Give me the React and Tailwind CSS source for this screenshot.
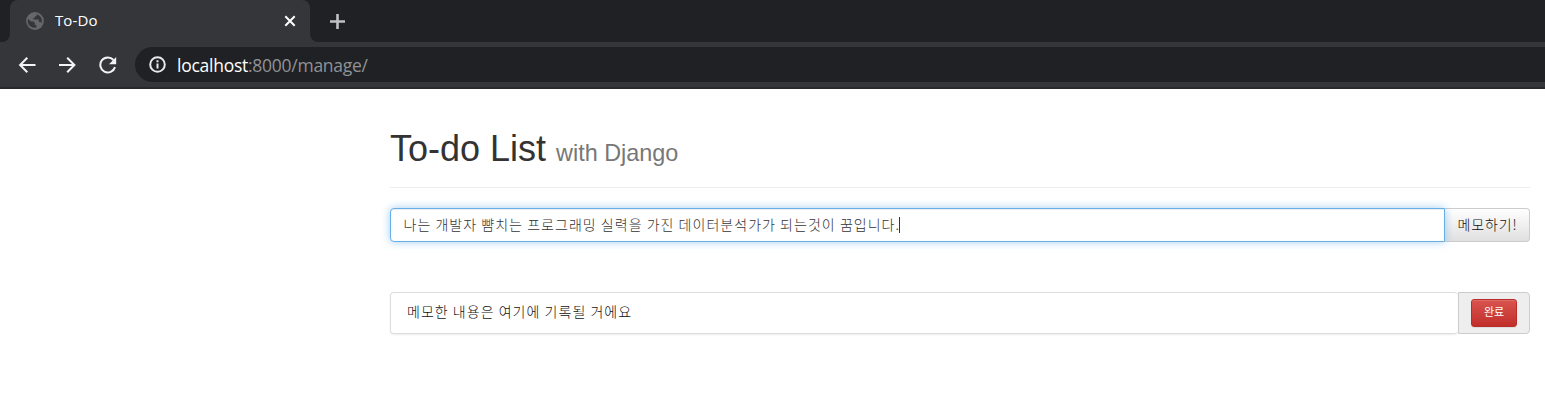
function Globe() {
  return (
    <svg className="h-[18px] w-[18px] shrink-0" viewBox="0 0 18 18">
      <circle cx="9" cy="9" r="8.9" fill="#64676b" />
      <path d="M2 7 L5.2 9.6 H7.6 L8.8 11 V13 H10.4 V15.6 A6.9 6.9 0 0 1 2 7 Z" fill="#35363a" />
      <path d="M10.6 2.2 A7 7 0 0 1 15.6 11.2 L14.6 10 H12.8 V7.6 H7.4 V5.8 H9 V4.2 H10.6 Z" fill="#35363a" />
    </svg>
  );
}

function Browser() {
  return (
    <header className="h-[89px] bg-[#35363a] font-['Open_Sans','Noto_Sans',sans-serif]">
      <div className="flex h-[42px] bg-[#35363a]">
        <div className="w-[10px] rounded-br-[8px] bg-[#202124]" />
        <div className="w-[300px] bg-[#202124]">
          <div className="flex h-full items-center rounded-t-[8px] bg-[#35363a] pr-[14px] pl-4">
            <Globe />
            <span className="ml-[11px] flex-1 pb-0.5 text-[15px] leading-5 tracking-[0.1px] text-white">To-Do</span>
            <svg className="h-3 w-3" viewBox="0 0 12 12" stroke="#fff" strokeWidth="2">
              <path d="M1.3 1.3 10.7 10.7 M10.7 1.3 1.3 10.7" />
            </svg>
          </div>
        </div>
        <div className="flex flex-1 items-center rounded-bl-[8px] bg-[#202124] pl-5">
          <svg className="h-[15px] w-[15px]" viewBox="0 0 15 15" stroke="#bec1c5" strokeWidth="2.6">
            <path d="M0 7.5H15 M7.5 0V15" />
          </svg>
        </div>
      </div>
      <nav className="flex h-[47px] items-start border-b-2 border-[#28292c] pt-[5px]">
        <div className="flex h-[35px] w-[135px] items-center gap-[22px] pl-[18px]">
          <svg className="h-[18px] w-[18px]" viewBox="0 0 18 18" fill="none" stroke="#f1f3f4" strokeWidth="2">
            <path d="M17.5 9H2.5 M9.3 1.8 2.1 9l7.2 7.2" />
          </svg>
          <svg className="h-[18px] w-[18px]" viewBox="0 0 18 18" fill="none" stroke="#f1f3f4" strokeWidth="2">
            <path d="M1 9h15 M9.2 1.8 16.4 9l-7.2 7.2" />
          </svg>
          <svg className="ml-px h-[18px] w-[18px]" viewBox="0 0 18 18" fill="none" stroke="#f1f3f4" strokeWidth="2">
            <path d="M14.5 4A7.5 7.5 0 1 0 16 11.1" />
            <path d="M17.2 1v7.2H10Z" fill="#f1f3f4" stroke="none" />
          </svg>
        </div>
        <div className="flex h-[35px] flex-1 items-center rounded-l-full bg-[#202124] pl-[14px]">
          <svg className="h-[17px] w-[17px]" viewBox="0 0 17 17" fill="none" stroke="#e8eaed" strokeWidth="2">
            <circle cx="8.5" cy="8.5" r="7.3" />
            <path d="M8.5 7.6v5 M8.5 4.3v2" />
          </svg>
          <span className="ml-[11px] text-[17.5px] leading-6 tracking-[-0.26px] text-[#8f9296]">
            <span className="text-white">localhost</span>:8000/manage/
          </span>
        </div>
      </nav>
    </header>
  );
}

export default function App() {
  return (
    <div className="h-[404px] overflow-hidden bg-white font-['Liberation_Sans','Noto_Sans_CJK_KR',sans-serif]">
      <Browser />
      <main className="ml-[390px] w-[1140px] pt-[40px]">
        <h1 className="h-[59px] border-b border-[#eeeeee] text-[36px] leading-[40px] text-[#333]">
          To-do List <small className="text-[23.4px] leading-none text-[#777]">with Django</small>
        </h1>
        <div className="mt-5 flex h-[34px]">
          <div className="relative flex w-[1055px] items-center rounded-l-[4px] border border-[#66afe9] bg-white pb-0.5 pl-[12.5px] shadow-[inset_0_1px_1px_rgba(0,0,0,0.075),0_0_8px_rgba(102,175,233,0.6)]">
            <span className="font-['Noto_Sans_CJK_KR',sans-serif] text-[14px] leading-5 font-light tracking-[1.03px] whitespace-nowrap text-[#333]">나는 개발자 뺨치는 프로그래밍 실력을 가진 데이터분석가가 되는것이 꿈입니다.</span>
            <span className="-ml-px h-4 w-px translate-y-px bg-[#333]" />
          </div>
          <button className="flex w-[85px] items-center justify-center rounded-r-[4px] border border-l-0 border-[#ccc] bg-linear-to-b from-white to-[#e0e0e0] pb-0.5 pl-px font-['Noto_Sans_CJK_KR',sans-serif] text-[14px] leading-5 font-light tracking-[0.9px] whitespace-nowrap text-[#111]">메모하기!</button>
        </div>
        <div className="mt-[50px] flex h-[42px]">
          <div className="flex w-[1068px] items-center rounded-[4px] border border-r-0 border-[#ddd] pb-1 pl-4 shadow-[0_1px_2px_rgba(0,0,0,0.075)]">
            <span className="font-['Noto_Sans_CJK_KR',sans-serif] text-[14px] leading-5 font-light tracking-[1.03px] whitespace-nowrap text-[#111]">메모한 내용은 여기에 기록될 거에요</span>
          </div>
          <div className="flex w-[72px] items-center justify-center rounded-r-[4px] border border-[#ccc] bg-[#eee]">
            <button className="flex h-[28px] w-[46px] items-center justify-center rounded-[3px] border border-[#b92c28] bg-linear-to-b from-[#d9534f] to-[#c12e2a] pb-1 font-['Noto_Sans_CJK_KR',sans-serif] text-[11px] leading-4 text-white shadow-[inset_0_1px_0_rgba(255,255,255,0.15),0_1px_1px_rgba(0,0,0,0.075)]">완료</button>
          </div>
        </div>
      </main>
    </div>
  );
}
